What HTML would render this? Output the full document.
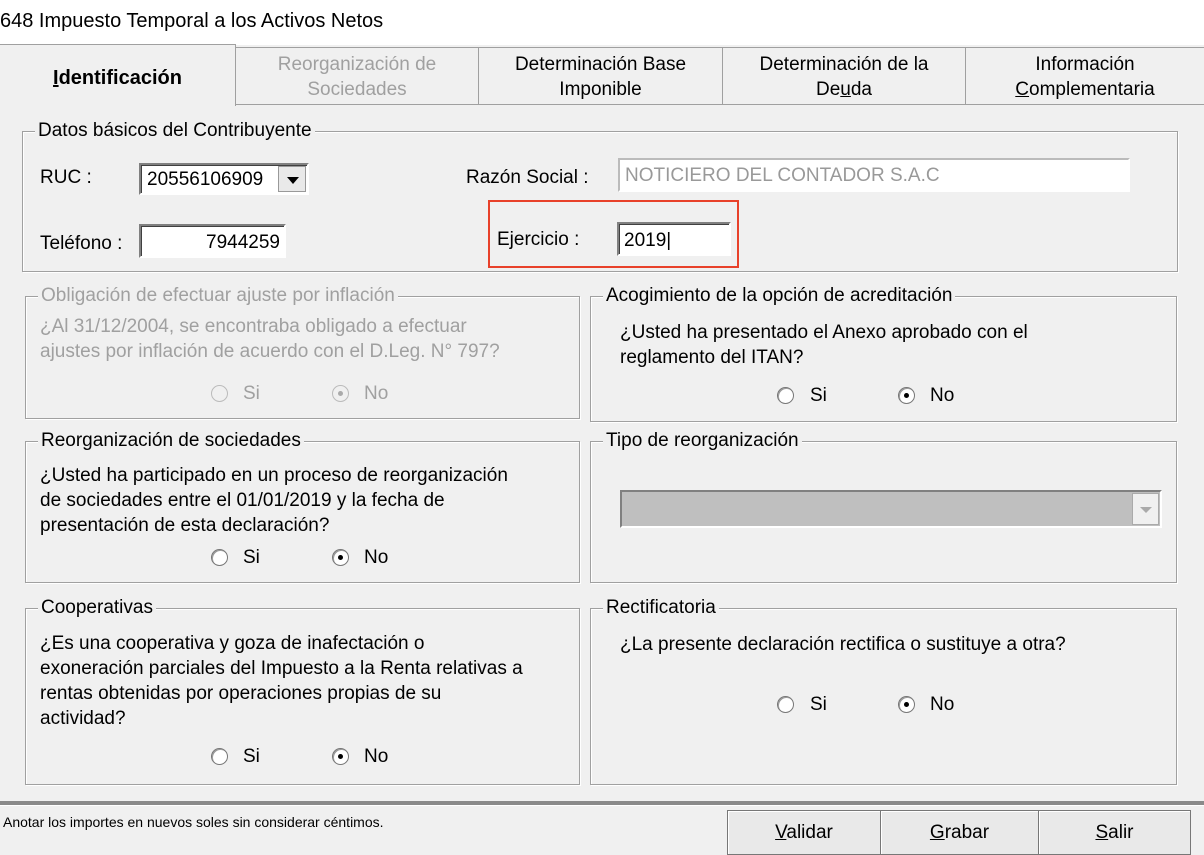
<!DOCTYPE html>
<html><head><meta charset="utf-8"><style>
*{margin:0;padding:0;box-sizing:border-box}
body{width:1204px;height:855px;background:#f0f0f0;font-family:"Liberation Sans",sans-serif;font-size:19px;color:#000;position:relative;overflow:hidden}
.a{position:absolute;white-space:nowrap}
.top{position:absolute;left:0;top:0;width:1204px;height:45px;background:#fff}
.tab{position:absolute;top:47px;height:58px;border:1px solid #a0a0a0;border-bottom:none;background:#f0f0f0;text-align:center;line-height:25px;padding-top:4px;font-size:19px}
.grp{position:absolute;border:1px solid #a0a0a0;box-shadow:inset 1px 1px 0 #fff,1px 1px 0 #fff}
.lg{position:absolute;top:-13px;left:12px;background:#f0f0f0;padding:0 3px;line-height:24px}
.dis{color:#a0a0a0}
.rad{position:absolute;width:17px;height:17px;border-radius:50%;background:#fff;border:1px solid #777;box-shadow:inset 1px 1px 0 #999}
.rad.on::after{content:"";position:absolute;left:5px;top:5px;width:5px;height:5px;border-radius:50%;background:#000}
.rad.d{background:#f0f0f0;border-color:#bbb;box-shadow:none}
.rad.d.on::after{background:#aaa}
.box{position:absolute;background:#fff;border:2px solid;border-color:#808080 #fff #fff #808080;box-shadow:inset 1px 1px 0 #404040}
.btn{position:absolute;top:810px;height:45px;border:1px solid #777;background:#e9e9e9;text-align:center;line-height:44px;box-shadow:inset 1px 1px 0 #fff}
u{text-decoration:underline}
</style></head><body>
<div class="top"></div>
<div class="a" style="left:0;top:10px;font-size:20px">648 Impuesto Temporal a los Activos Netos</div>

<div class="tab dis" style="left:235px;width:244px">Reorganización de<br>Sociedades</div>
<div class="tab" style="left:478px;width:245px">Determinación Base<br>Imponible</div>
<div class="tab" style="left:722px;width:244px">Determinación de la<br>De<u>u</u>da</div>
<div class="tab" style="left:965px;width:240px">Información<br><u>C</u>omplementaria</div>
<div class="a" style="left:0;top:104px;width:1204px;height:1px;background:#a0a0a0"></div>
<div class="tab" style="left:0;top:44px;width:236px;height:62px;border-bottom:none;border-left:none;font-weight:bold;line-height:66px;padding:0;font-size:20px;z-index:2"><u>I</u>dentificación</div>

<div class="grp" style="left:22px;top:131px;width:1156px;height:141px"><div class="lg">Datos básicos del Contribuyente</div></div>
<div class="a" style="left:40px;top:167px">RUC :</div>
<div class="box" style="left:139px;top:163px;width:170px;height:32px"><span class="a" style="left:6px;top:4px">20556106909</span><div class="a" style="right:1px;top:1px;width:28px;height:26px;background:#e9e9e9;border:1px solid #999"><div class="a" style="left:8px;top:10px;border-left:6px solid transparent;border-right:6px solid transparent;border-top:7px solid #000"></div></div></div>
<div class="a" style="left:466px;top:167px">Razón Social :</div>
<div class="box" style="left:618px;top:158px;width:512px;height:34px;border-color:#bbb #fff #fff #bbb;box-shadow:none"><span class="a dis" style="left:5px;top:5px;color:#999">NOTICIERO DEL CONTADOR S.A.C</span></div>
<div class="a" style="left:40px;top:233px">Teléfono :</div>
<div class="box" style="left:139px;top:224px;width:147px;height:34px"><span class="a" style="right:4px;top:6px">7944259</span></div>
<div class="a" style="left:488px;top:200px;width:251px;height:68px;border:2px solid #e8412a"></div>
<div class="a" style="left:497px;top:229px">Ejercicio :</div>
<div class="box" style="left:617px;top:222px;width:114px;height:34px"><span class="a" style="left:5px;top:6px">2019|</span></div>

<div class="grp" style="left:25px;top:296px;width:555px;height:123px"><div class="lg dis">Obligación de efectuar ajuste por inflación</div></div>
<div class="a dis" style="left:40px;top:314px;line-height:25px">¿Al 31/12/2004, se encontraba obligado a efectuar<br>ajustes por inflación de acuerdo con el D.Leg. N° 797?</div>
<div class="rad d" style="left:211px;top:385px"></div><div class="a dis" style="left:243px;top:383px">Si</div>
<div class="rad d on" style="left:332px;top:385px"></div><div class="a dis" style="left:364px;top:383px">No</div>

<div class="grp" style="left:590px;top:296px;width:587px;height:126px"><div class="lg">Acogimiento de la opción de acreditación</div></div>
<div class="a" style="left:620px;top:320px;line-height:25px">¿Usted ha presentado el Anexo aprobado con el<br>reglamento del ITAN?</div>
<div class="rad" style="left:777px;top:387px"></div><div class="a" style="left:810px;top:385px">Si</div>
<div class="rad on" style="left:898px;top:387px"></div><div class="a" style="left:930px;top:385px">No</div>

<div class="grp" style="left:25px;top:441px;width:555px;height:142px"><div class="lg">Reorganización de sociedades</div></div>
<div class="a" style="left:40px;top:463px;line-height:25px">¿Usted ha participado en un proceso de reorganización<br>de sociedades entre el 01/01/2019 y la fecha de<br>presentación de esta declaración?</div>
<div class="rad" style="left:211px;top:549px"></div><div class="a" style="left:243px;top:547px">Si</div>
<div class="rad on" style="left:332px;top:549px"></div><div class="a" style="left:364px;top:547px">No</div>

<div class="grp" style="left:590px;top:441px;width:587px;height:142px"><div class="lg">Tipo de reorganización</div></div>
<div class="a" style="left:620px;top:490px;width:542px;height:38px;background:#bfbfbf;border:2px solid;border-color:#808080 #fff #fff #808080"><div class="a" style="right:1px;top:1px;width:27px;height:32px;background:#f0f0f0;border:1px solid #aaa"><div class="a" style="left:7px;top:13px;border-left:6px solid transparent;border-right:6px solid transparent;border-top:6px solid #aaa"></div></div></div>

<div class="grp" style="left:25px;top:608px;width:555px;height:177px"><div class="lg">Cooperativas</div></div>
<div class="a" style="left:40px;top:631px;line-height:25px">¿Es una cooperativa y goza de inafectación o<br>exoneración parciales del Impuesto a la Renta relativas a<br>rentas obtenidas por operaciones propias de su<br>actividad?</div>
<div class="rad" style="left:211px;top:748px"></div><div class="a" style="left:243px;top:746px">Si</div>
<div class="rad on" style="left:332px;top:748px"></div><div class="a" style="left:364px;top:746px">No</div>

<div class="grp" style="left:590px;top:608px;width:587px;height:177px"><div class="lg">Rectificatoria</div></div>
<div class="a" style="left:620px;top:634px">¿La presente declaración rectifica o sustituye a otra?</div>
<div class="rad" style="left:777px;top:696px"></div><div class="a" style="left:810px;top:694px">Si</div>
<div class="rad on" style="left:898px;top:696px"></div><div class="a" style="left:930px;top:694px">No</div>

<div class="a" style="left:0;top:801px;width:1204px;height:5px;background:#8a8a8a;border-bottom:1px solid #fff"></div>
<div class="a" style="left:3px;top:814px;font-size:14px">Anotar los importes en nuevos soles sin considerar céntimos.</div>
<div class="btn" style="left:727px;width:154px"><u>V</u>alidar</div>
<div class="btn" style="left:880px;width:159px"><u>G</u>rabar</div>
<div class="btn" style="left:1038px;width:153px"><u>S</u>alir</div>
</body></html>
